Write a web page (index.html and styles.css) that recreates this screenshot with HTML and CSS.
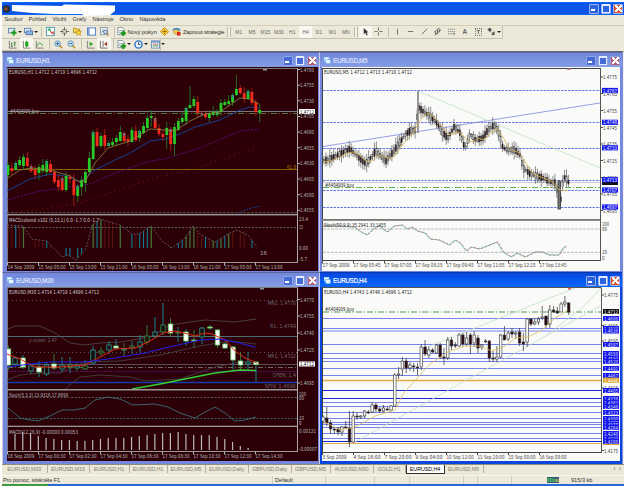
FILE: index.html
```html
<!DOCTYPE html>
<html lang="cs">
<head>
<meta charset="utf-8">
<title>EURUSD,H4</title>
<link rel="stylesheet" href="styles.css">
</head>
<body>
<svg class="defs" width="0" height="0">
  <symbol id="newchart" viewBox="0 0 10 10"><rect x=".5" y="1.5" width="7" height="5" fill="#dcecf8" stroke="#5d83a8"/><path d="M6.5 3.5v6M3.5 6.5h6" stroke="#1fa01f" stroke-width="2.2"/></symbol>
  <symbol id="profiles" viewBox="0 0 10 10"><rect x=".5" y="1.5" width="7" height="5" fill="#e8f1fb" stroke="#5583bb"/><rect x="2.5" y="4.5" width="7" height="4" fill="#8fb8e8" stroke="#4a74ac"/></symbol>
  <symbol id="market" viewBox="0 0 10 10"><rect x=".5" y=".5" width="9" height="9" fill="#fff" stroke="#4f9fb5"/><path d="M2 4l2-2 1 3" stroke="#1f9f3f" fill="none" stroke-width="1.3"/><path d="M5 5l3 3M8 5v3" stroke="#c33" stroke-width="1.2"/></symbol>
  <symbol id="target" viewBox="0 0 10 10"><circle cx="5" cy="5" r="2.7" fill="none" stroke="#777"/><path d="M5 0v4M5 6v4M0 5h4M6 5h4" stroke="#666"/></symbol>
  <symbol id="navi" viewBox="0 0 10 10"><path d="M.5 1.5h3l1 1h3v4h-7z" fill="#f6d35b" stroke="#b78a20"/><path d="M6.3 3l1 2 2.3.3-1.7 1.6.5 2.5-2.1-1.3-2 1.3.4-2.5L3 5.300l2.300-.3z" fill="#ffd92e" stroke="#a97a13" stroke-width=".6"/></symbol>
  <symbol id="terminal" viewBox="0 0 10 10"><rect x=".5" y="1" width="9" height="8" fill="#fff" stroke="#4476c4"/><path d="M2 1v8" stroke="#7da4e0" stroke-width="2"/></symbol>
  <symbol id="tester" viewBox="0 0 10 10"><rect x=".5" y=".5" width="8" height="8" fill="#eaf0f4" stroke="#8c9cac"/><path d="M2 6l2-3 2 2" stroke="#48a" fill="none"/><circle cx="6" cy="5.500" r="2" fill="#cde4ff" stroke="#668"/><path d="M7.500 7l2 2.500" stroke="#a83" stroke-width="1.300"/></symbol>
  <symbol id="order" viewBox="0 0 10 10"><path d="M1 .5h5l2 2v6H1z" fill="#fff" stroke="#7b8b9b"/><path d="M2 4h4M2 6h2" stroke="#89a"/><path d="M7 4v6M4 7h6" stroke="#189818" stroke-width="2.300"/></symbol>
  <symbol id="diamond" viewBox="0 0 10 10"><path d="M5 .5L9.500 5 5 9.500.5 5z" fill="#ffd13b" stroke="#c08a12"/><path d="M5 2.500v5M2.500 5h5" stroke="#8d6810" stroke-width=".9"/></symbol>
  <symbol id="expert" viewBox="0 0 10 10"><ellipse cx="5" cy="3" rx="4.500" ry="2" fill="#4c8fd6"/><circle cx="4.500" cy="5" r="3" fill="#f0c850" stroke="#a77f24" stroke-width=".6"/><path d="M2 3q3-4 5.500 0" fill="#3c7fca"/><rect x="5.500" y="5.500" width="4" height="4" fill="#d9281c"/></symbol>
  <symbol id="cursor" viewBox="0 0 10 10"><path d="M3 1v7l1.800-1.500L6.200 9.500l1.300-.7L6 6h2.400z" fill="#333"/></symbol>
  <symbol id="cross" viewBox="0 0 10 10"><path d="M5 .5v3.500M5 6v3.500M.5 5H4M6 5h3.500" stroke="#666"/></symbol>
  <symbol id="vline" viewBox="0 0 10 10"><path d="M5 2v6.500" stroke="#666"/></symbol>
  <symbol id="hline" viewBox="0 0 10 10"><path d="M2 5h6" stroke="#666"/></symbol>
  <symbol id="trend" viewBox="0 0 10 10"><path d="M2 8l6-6" stroke="#666"/></symbol>
  <symbol id="channel" viewBox="0 0 10 10"><path d="M1 6l6-5M2 9l7-6M3 5v4M5 3v5M7 2v4" stroke="#555" stroke-width=".9"/></symbol>
  <symbol id="fib" viewBox="0 0 10 10"><path d="M1 2.500h8M1 5h8M1 7.500h8" stroke="#888" stroke-dasharray="1.500 .6"/><path d="M8 6v3" stroke="#777"/></symbol>
  <symbol id="arrows" viewBox="0 0 10 10"><path d="M3 1l2 2-2 2-2-2zM5 5.500l3 2.500M8 5v3.500H5M4 5l1 1" fill="#444" stroke="#444" stroke-width=".7"/></symbol>
  <symbol id="bars" viewBox="0 0 10 10"><path d="M1.500 1v8h8M4 3v5M4 7h1.500M7.500 2v5M7.500 3H9" fill="none" stroke="#777"/><path d="M4 3v4M7 2v4" stroke="#3f9b3f"/></symbol>
  <symbol id="candles" viewBox="0 0 10 10"><path d="M1.500 1v8h8" fill="none" stroke="#777"/><path d="M5 1v7" stroke="#187c18"/><rect x="3.500" y="2" width="3.500" height="5" fill="#18a818"/></symbol>
  <symbol id="line" viewBox="0 0 10 10"><path d="M1.500 1v8h8" fill="none" stroke="#777"/><path d="M2 7l3-4 4 3" fill="none" stroke="#3b9d3b"/></symbol>
  <symbol id="zoomin" viewBox="0 0 10 10"><path d="M6 6l3 3" stroke="#c19a35" stroke-width="2"/><circle cx="4" cy="4" r="3" fill="#d2ecff" stroke="#4688b4"/><path d="M4 2.500v3M2.500 4h3" stroke="#246"/></symbol>
  <symbol id="zoomout" viewBox="0 0 10 10"><path d="M6 6l3 3" stroke="#c19a35" stroke-width="2"/><circle cx="4" cy="4" r="3" fill="#d2ecff" stroke="#4688b4"/><path d="M2.500 4h3" stroke="#246"/></symbol>
  <symbol id="scroll" viewBox="0 0 10 10"><path d="M1.500 1v8h8" fill="none" stroke="#777"/><path d="M4 2l4 2.500L4 7z" fill="#29a429"/></symbol>
  <symbol id="shift" viewBox="0 0 10 10"><path d="M1.500 1v8h8M4.500 1v7" fill="none" stroke="#666"/><path d="M9 2L5.500 4.500 9 7z" fill="#a83b2b"/></symbol>
  <symbol id="clock" viewBox="0 0 10 10"><circle cx="5" cy="5" r="4" fill="#e9f4ff" stroke="#2b6fc8" stroke-width="1.500"/><path d="M5 2.500V5h2" fill="none" stroke="#246"/></symbol>
  <symbol id="template" viewBox="0 0 10 10"><rect x=".5" y="1" width="9" height="8" fill="#e4edf5" stroke="#6c8cb0"/><path d="M.5 2h9" stroke="#5c8fd0" stroke-width="1.500"/><path d="M2 5l2-1 2 1 2-1" stroke="#c54" fill="none"/><path d="M2 7l2-1 2 1 2-1" stroke="#393" fill="none"/></symbol>
  <symbol id="doc" viewBox="0 0 8 8"><rect x=".5" y=".5" width="5" height="4" fill="#fff" stroke="#a7e0ff"/><rect x="2" y="3" width="5.500" height="4.500" fill="#e9f8ff" stroke="#68a7e0" stroke-width=".7"/></symbol>
</svg>

<div class="app">
  <header class="title">
    <svg class="logo" viewBox="0 0 340 12" preserveAspectRatio="none"><circle cx="4.500" cy="6" r="3.700" fill="#26303b"/><circle cx="4" cy="6" r="1.700" fill="#8a4c3a"/><path d="M10 2L60 3 62 1.500 113 2.500 113 8 108 12 83 13 80 11 52 11 30 10 10 8z" fill="#fff"/></svg>
    <div class="controls"><i class="min"></i><i class="max"></i><i class="close"></i></div>
  </header>
  <nav class="menu"><span>Soubor</span><span>Pohled</span><span>Vložit</span><span>Grafy</span><span>Nástroje</span><span>Okno</span><span>Nápověda</span></nav>
  <div class="bars">
    <div class="bar first">
      <b class="drop"><svg><use href="#newchart"/></svg></b><b class="drop"><svg><use href="#profiles"/></svg></b><hr>
      <b><svg><use href="#market"/></svg></b><b><svg><use href="#target"/></svg></b><b><svg><use href="#navi"/></svg></b><b><svg><use href="#terminal"/></svg></b><b><svg><use href="#tester"/></svg></b><hr>
      <b class="label order"><svg><use href="#order"/></svg><span>Nový pokyn</span></b><b><svg><use href="#diamond"/></svg></b><b class="label strategy"><svg><use href="#expert"/></svg><span>Zapnout strategie</span></b>
      <hr class="grip">
      <b class="time">M1</b><b class="time">M5</b><b class="time">M15</b><b class="time">M30</b><b class="time">H1</b><b class="time on">H4</b><b class="time">D1</b><b class="time">W1</b><b class="time">MN</b>
      <hr class="grip">
      <b class="on"><svg><use href="#cursor"/></svg></b><b><svg><use href="#cross"/></svg></b><hr>
      <b><svg><use href="#vline"/></svg></b><b><svg><use href="#hline"/></svg></b><b><svg><use href="#trend"/></svg></b><b><svg><use href="#channel"/></svg></b><b><svg><use href="#fib"/></svg></b><b class="letter">A</b><b class="letter"><u>T</u></b><b class="drop"><svg><use href="#arrows"/></svg></b>
    </div>
    <div class="bar second">
      <b><svg><use href="#bars"/></svg></b><b class="on"><svg><use href="#candles"/></svg></b><b><svg><use href="#line"/></svg></b><hr>
      <b><svg><use href="#zoomin"/></svg></b><b><svg><use href="#zoomout"/></svg></b><hr>
      <b><svg><use href="#scroll"/></svg></b><b class="on"><svg><use href="#shift"/></svg></b><hr>
      <b class="drop"><svg><use href="#order"/></svg></b><b class="drop"><svg><use href="#clock"/></svg></b><b class="drop"><svg><use href="#template"/></svg></b>
    </div>
  </div>
  <main class="desk">
    <section class="win"><h2><svg><use href="#doc"/></svg>EURUSD,H1<div class="controls"><i class="min"></i><i class="max"></i><i class="close"></i></div></h2><svg class="chart dark" id="h1" viewBox="7 67 311 204"></svg></section>
    <section class="win"><h2><svg><use href="#doc"/></svg>EURUSD,M5<div class="controls"><i class="min"></i><i class="max"></i><i class="close"></i></div></h2><svg class="chart light" id="m5" viewBox="322 67 298 204"></svg></section>
    <section class="win"><h2><svg><use href="#doc"/></svg>EURUSD,M30<div class="controls"><i class="min"></i><i class="max"></i><i class="close"></i></div></h2><svg class="chart dark" id="m30" viewBox="7 287 311 174"></svg></section>
    <section class="win active"><h2><svg><use href="#doc"/></svg>EURUSD,H4<div class="controls"><i class="min"></i><i class="max"></i><i class="close"></i></div></h2><svg class="chart light" id="h4" viewBox="322 287 298 174"></svg></section>
  </main>
  <div class="tabs"><span>EURUSD,M30</span><span>EURUSD,M15</span><span>EURUSD,H1</span><span>EURUSD,H1</span><span>EURUSD,M5</span><span>EURUSD,Daily</span><span>GBPUSD,Daily</span><span>GBPUSD,M5</span><span>AUDUSD,M30</span><span>GOLD,H1</span><span class="current">EURUSD,H4</span><span>EURUSD,M5</span><em>‹&ensp;›</em></div>
  <footer class="status"><span>Pro pomoc, stiskněte F1</span><span>Default</span><span></span><span></span><span></span><span></span><span></span><span class="net"><svg viewBox="0 0 12 6"><path d="M0 0h12v6H0z" fill="#365f78"/><path d="M1 1v4M3 1v4M5 1v4M7 2v3" stroke="#4ed34e"/><path d="M9 2v3M11 2v3" stroke="#e6cf4a"/></svg>915/3 kb</span></footer>
  <div class="task"><i></i></div>
</div>
<script src="charts.js"></script>
</body>
</html>
```
FILE: styles.css
```css
* { box-sizing: border-box; }
body { margin: 0; width: 625px; height: 486px; overflow: hidden; background: #fff; font-family: "Liberation Sans", sans-serif; font-size: 6px; color: #333; }
.defs { display: block; }
.app { width: 622px; height: 484px; margin: 2px 0 0 2px; display: flex; flex-direction: column; background: #ece9d8; }
.title { height: 13px; flex: none; display: flex; justify-content: space-between; align-items: center; background: #0a55e8; padding-right: 1px; border-bottom: 1px solid #0b66fa; border-top: 1px solid #0b66fa; }
.logo { width: 340px; height: 12px; overflow: visible; }
.controls { display: flex; gap: 2px; margin-left: auto; }
.controls i { width: 10px; height: 10px; border: 1px solid #9db4f0; border-radius: 1px; background: #2e63dc; display: flex; align-items: center; justify-content: center; }
.controls .min::before { content: ""; width: 4px; height: 2px; background: #fff; margin: 3px 2px 0 0; }
.controls .max::before { content: ""; width: 6px; height: 6px; border: 1px solid #e3ebff; border-top-width: 2px; }
.controls .close { background: #e2532f; }
.controls .close::before { content: ""; width: 7px; height: 7px; background: linear-gradient(45deg, transparent 42%, #fff 42% 58%, transparent 58%), linear-gradient(135deg, transparent 42%, #fff 42% 58%, transparent 58%); }
.menu { height: 10px; flex: none; display: grid; grid-template-columns: 24px 24px 20px 20px 27px 20px 40px; padding-left: 2.500px; font-size: 5.700px; line-height: 9px; white-space: nowrap; }
.bars { flex: none; height: 26px; border-top: 1px solid #d0cdbd; }
.bar { height: 12.500px; display: flex; align-items: center; padding-left: 4px; border: solid #c6c3b4; border-width: 0 1px 1px 0; }
.first { width: 501px; }
.second { width: 159px; }
.bar b { width: 13.500px; height: 12px; flex: none; display: flex; align-items: center; justify-content: center; font-weight: 400; color: #666; }
.bar svg { width: 9px; height: 9px; flex: none; }
.bar .drop { width: 16.500px; justify-content: flex-start; padding-left: 1.500px; gap: 1px; }
.drop::after { content: ""; border: 2px solid transparent; border-top-color: #222; border-bottom: 0; }
.bar .on { background: #f8f7f0; }
.bar hr { width: 1px; height: 10px; border: 0; margin: 0 2px; background: #c2bfae; flex: none; }
.bar .grip { width: 4px; margin: 0 1px; border: solid #bbb8a8; border-width: 0 1px; background: #f4f2e8; }
.bar .label { font-size: 5.800px; letter-spacing: -.1px; color: #333; justify-content: flex-start; gap: 2px; white-space: nowrap; padding-left: 0; }
.bar .order { width: 41px; }
.bar .strategy { width: 55px; padding-left: 1px; }
.bar .strategy span { letter-spacing: -.22px; }
.bar .time { width: 13.400px; font-size: 5px; }
.bar .letter { font-size: 6.500px; font-weight: 700; }
.letter u { text-decoration: none; border: 1px dotted #777; width: 7px; height: 8px; line-height: 7px; font-size: 6px; text-align: center; }
.second b { width: 13.500px; }
.second .drop { width: 17px; }
.desk { flex: none; height: 413px; display: grid; grid-template-columns: 317px 303px; grid-template-rows: 220px 192px; background: #7c8fdd; border-top: 1px solid #68687c; border-right: 1px solid #eee; }
.win { display: flex; flex-direction: column; min-width: 0; background: #7388dc; padding: 1px 0 0 2px; border-left: 1px solid #ccd; border-top: 1px solid #59669c; overflow: hidden; }
.win h2 { height: 13px; flex: none; display: flex; align-items: center; gap: 2px; margin: 0; padding: 0 2px 0 2px; color: #d3ddfa; font-size: 6.500px; font-weight: 700; letter-spacing: -.45px; background: linear-gradient(#7289dc, #839ce3); }
.win h2 > svg { width: 7px; height: 7px; }
.win:not(.active) .controls i { border-color: #8fa5ea; background-color: #466bd5; }
.win:not(.active) .controls i.close { background-color: #b85d71; }
.win.active { background: #0846dc; border-top-color: #0638ad; }
.win.active h2 { background: linear-gradient(#0a4ae0, #0768fb); color: #e6efff; }
.chart { display: block; flex: none; margin-left: 2px; }
#h1 { width: 311px; height: 204px; }
#m30 { width: 311px; height: 174px; }
#m5 { width: 298px; height: 204px; }
#h4 { width: 298px; height: 174px; }
.win:nth-child(even) { padding-left: 0; }
.win:nth-child(even) h2 { padding-left: 4px; }
.chart.dark { background: #2d0007; }
.chart.light { background: #fafaf8; }
.chart text { font-family: "DejaVu Sans Condensed", "DejaVu Sans", sans-serif; font-size: 5.600px; }
.tabs { flex: none; height: 11px; display: grid; grid-template-columns: 45.500px 42px 40px 38px 38px 43px 43px 39px 43px 32px 39px 39px 1fr; line-height: 8px; font-size: 5.500px; letter-spacing: -.17px; color: #85826f; border-top: 1px solid #8e8c80; white-space: nowrap; }
.tabs span { border-right: 1px solid #b4b09e; height: 8px; text-align: center; }
.tabs .current { background: #fff; color: #000; height: 9px; border: solid #333; border-width: 0 1px 1px; }
.tabs em { font-style: normal; font-size: 7px; text-align: right; padding-right: 3px; }
.status { flex: none; height: 9px; display: grid; grid-template-columns: 271px 53px 49px 35px 54px 14px 34px 1fr; line-height: 8px; border-top: 1px solid #f9f8f1; white-space: nowrap; font-size: 5.600px; }
.status span { padding-left: 2px; border-right: 1px solid #d0cdbd; }
.status span:first-child { padding-left: 1px; letter-spacing: -.15px; }
.status .net { border: 0; padding-left: 35px; display: flex; gap: 12px; align-items: center; }
.net svg { width: 12px; height: 6px; }
.task { flex: 1; background: #2769d8; }
.task i { display: block; width: 46px; height: 100%; background: #3d9a41; }
```
FILE: charts.js
```js
const NS = 'http://www.w3.org/2000/svg';

function pane(id) {
  const root = document.getElementById(id);
  const add = (tag, attrs, text) => {
    const el = document.createElementNS(NS, tag);
    for (const k in attrs) el.setAttribute(k, attrs[k]);
    if (text !== undefined) el.textContent = text;
    root.appendChild(el);
  };
  return {
    rect: (x, y, w, h, fill, stroke, sw = 0.8) => add('rect', { x, y, width: w, height: h, fill, ...(stroke ? { stroke, 'stroke-width': sw } : {}) }),
    line: (x1, y1, x2, y2, stroke, dash, w = 1) => add('line', { x1, y1, x2, y2, stroke, 'stroke-width': w, 'stroke-dasharray': dash || 'none' }),
    poly: (points, stroke, dash, w = 0.8) => add('polyline', { points, fill: 'none', stroke, 'stroke-width': w, 'stroke-dasharray': dash || 'none' }),
    text: (x, y, str, fill, len) => add('text', { x, y: y + 2, fill, ...(len ? { textLength: len, lengthAdjust: 'spacingAndGlyphs' } : {}) }, str)
  };
}

// Deterministic jitter, so that each load draws the same bars.
function random(seed) {
  return () => (seed = (seed * 16807) % 2147483647) / 2147483647;
}

function at(points, x) {
  for (let i = 1; i < points.length; i++) {
    const [a, b] = [points[i - 1], points[i]];
    if (x <= b[0]) return a[1] + (b[1] - a[1]) * (x - a[0]) / (b[0] - a[0]);
  }
  return points[points.length - 1][1];
}
const pts = s => s.split(' ').map(p => p.split(',').map(Number));

function times(p, x0, y, labels, fill) {
  labels.forEach((t, i) => {
    p.text(x0 + 31 * i + 0.5, y, t, fill, t.length > 10 ? 27 : 24);
    p.line(x0 + 31 * i + 0.5, y - 4.5, x0 + 31 * i + 0.5, y - 1.5, fill);
  });
}

/* EURUSD,H1 */
{
  const p = pane('h1'), fg = '#b4bbb4';
  p.line(7, 68.5, 298, 68.5, '#777'); p.line(7.5, 68, 7.5, 263, '#777');
  p.line(7, 111.5, 298, 111.5, '#777c80'); p.line(7, 113.5, 298, 113.5, '#4c7a34', '6 2 1 2');
  p.line(7, 169.5, 298, 169.5, '#866000'); p.text(287, 167, '61.8', '#a87800', 9);
  p.poly('7,213 50,208 80,203 120,190 155,178 190,170 220,160 255,148', '#a21c18', '1 4');
  p.poly('7,200 40,191 70,187 90,184 115,173 150,161 165,159 200,148 240,131 259,129', '#6a10a0', '2 1.500');
  p.poly('238,213 248,209 260,206', '#1749a8', '2 1');
  p.poly('7,191 30,179 50,174 65,176 80,182 95,170 115,160 130,153 150,141 165,139 180,134 195,127 220,120 240,110 250,107 259,108', '#0c50b8');
  const candles = [[165,175],[168,171,1],[163,170],[160,165],[157,166],[158,166,1],[166,171,1],[170,175,1],[167,173,0,180],[165,171],[161,172],[164,172,1],[172,182,1],[180,187,1],[178,190,1],[176,190],[177,179,1],[180,195,1,206],[186,196,0,202],[180,187,0,196],[172,183,0,192],[158,172],[132,159,0,160],[132,146,1],[136,146],[135,146,1],[143,146],[142,145],[138,142],[132,141],[133,141,1],[139,142,1],[130,142],[131,140,1],[131,138],[126,133],[118,128],[116,118,0,127],[118,128,1],[128,134,1],[134,137,1],[128,135,0,149],[129,144,1,151],[127,144,0,156],[121,130],[118,122],[108,121],[105,108],[99,106],[102,113,1],[113,114.5,1],[114,117,1],[113,118],[112,115],[111,115],[103,112],[102,105],[101,104],[95,102],[89,95],[88,93,1],[93,99,1],[91,99],[92,103,1],[102,112,1],[110,113,0,122]];
  candles.forEach(([t, b, red, low], i) => {
    const x = 8 + i * 3.872, c = red ? '#f52a1d' : '#27cb27';
    const high = t - [3, 6, 2, 4][i % 4] - (i === 59 ? 10 : 0) - (i === 47 ? 15 : 0);
    p.line(x, high, x, low || b + [2, 4, 1][i % 3], red ? '#a82018' : '#27752a', '', 0.9);
    p.rect(x - 1.4, t, 2.8, b - t, c);
    if (i % 4 === 2) p.rect(x - 0.6, t, 1.2, 3, '#1c89bb');
  });
  p.poly('8,178 20,170 31,168 50,170 70,176 80,182 86,180 95,163 108,148 130,141 150,129 165,130 175,131 190,121 205,114 220,112 240,98 250,99 259,104', '#8c8a3c');
  p.line(7, 212.8, 298, 212.8, '#57575b', '3 1'); p.rect(7, 214, 291, 1.400, '#999');
  p.line(7, 227.5, 298, 227.5, '#5a5f60', '2 1.500');
  const macd = pts('7,225 23,226 32,239 47,241 62,257 68,255 76,260 86,249 92,225 100,219 120,225 132,234 139,234 151,226 162,241 172,248 185,238 193,226 200,234 215,242 230,233 237,230 248,235 257,247');
  for (let i = 0; i < 64; i++) {
    const x = 8 + i * 3.872, y = at(macd, x);
    const teal = [2, 10, 15, 16, 18, 19, 23, 32, 34, 35, 36, 42, 44, 45, 51, 54, 56, 63].includes(i);
    const green = [4, 22, 24, 29, 37, 46, 47, 48, 53, 55, 57].includes(i);
    const red = [0, 1, 3, 7, 8, 9, 11, 25, 26, 27, 33, 49, 50, 52, 58, 60, 61].includes(i);
    if (teal) p.line(x, y, x, 248, '#107a94', '', 1.1);
    else if (green) p.line(x, y, x, 248, '#447035', '', 1.3);
    else if (red) p.line(x, y, x, 248, '#8b231c', '1 1');
  }
  p.poly(macd.join(' '), '#63676a', '2 1.500');
  p.text(260, 253, '16', '#a7aaa7', 7);
  p.line(7, 262.5, 298, 262.5, '#999'); p.line(297.5, 68, 297.5, 263, '#aaa');
  p.text(9, 72, 'EURUSD,H1  1.4712 1.4719 1.4696 1.4712', '#ccc', 88);
  p.text(10, 111, '#6404939 buy', '#bbb', 29);
  p.text(9, 220, 'MACDcolored v102 (5,13,1) 0.0 -1.7 0.0 -1.7', '#ccc', 90);
  ['1.4780', '1.4755', '1.4730', '1.4705', '1.4680', '1.4655', '1.4630', '1.4605', '1.4580', '1.4555'].forEach((t, i) => {
    const y = 69.5 + i * 15.65; p.text(300, y, t, fg, 14); p.line(298, y, 300, y, fg);
  });
  [['23.4', 219, 9], ['15', 227, 4], ['0.00', 248, 9], ['-5.7', 259, 8]].forEach(a => p.text(299, a[1], a[0], fg, a[2]));
  p.rect(299, 109, 16, 5, '#fff'); p.text(300, 111.6, '1.4712', '#111', 14);
  p.rect(263, 69, 4, 1.500, '#8d9aa4');
  times(p, 7, 267, ['14 Sep 2009', '15 Sep 05:00', '15 Sep 13:00', '15 Sep 21:00', '16 Sep 05:00', '16 Sep 13:00', '16 Sep 21:00', '17 Sep 05:00', '17 Sep 13:00'], fg);
}

/* EURUSD,M5 */
{
  const p = pane('m5'), fg = '#444';
  p.line(322, 68.5, 601, 68.5, '#444'); p.line(322.5, 68, 322.5, 261, '#444');
  [90.5, 122.5, 148.5, 180.5, 190.5, 207.5].forEach(y => p.line(323, y, 600, y, '#6678e4', '2.500 1'));
  p.line(323, 187.5, 600, 187.5, '#5dab5d', '6 2 1 2'); p.line(323, 182.5, 600, 182.5, '#c9c9cf');
  p.line(323, 146.5, 600, 103, '#7c86dc', '', 0.8);
  p.line(418, 91, 600, 168, '#bfe0ca', '', 0.8);
  const path = pts('323,161 332,158 340,154 350,149 358,157 366,164 376,151 386,161 393,152 400,142 406,134 412,130 416,130 418,107 424,112 432,118 437,123 442,132 448,138 454,127 460,133 465,149 470,134 476,140 483,138 488,130 494,125 498,131 503,148 508,150 515,150 520,155 523,168 530,174 537,176 543,178 550,182 556,183 558,200 560,206 562,186 565,176 568,182');
  const smooth = [];
  for (let x = 323; x < 569; x += 5) smooth.push([x, (at(path, x) + at(path, Math.max(323, x - 8)) + at(path, Math.max(323, x - 4))) / 3 + 1]);
  const rnd = random(71);
  for (let x = 324; x < 569; x += 1.94) {
    const y = at(path, x), h = 2 + rnd() * 5, dark = rnd() > 0.5;
    p.line(x, y - h - rnd() * 4, x, y + h + rnd() * 3, '#444', '', 0.6);
    p.rect(x - 0.6, y - h / 2, 1.2, h, dark ? '#2d0a12' : '#ddd', '#333', 0.5);
  }
  p.line(418, 91, 418, 133, '#888', '', 1.7); p.rect(558, 181, 2.5, 28, '#777', '#333');
  p.poly(smooth.join(' '), '#d8b64e');
  p.rect(322, 219, 279, 1.800, '#777');
  p.line(323, 229, 600, 229, '#bbb', '3 1'); p.line(323, 252.300, 600, 252.300, '#bbb', '3 1');
  const st = '323,226 340,226 355,227 362,232 368,235 374,229 380,226 388,232 395,226 403,225 408,229 413,227 418,231 426,233 431,239 440,240 450,245 456,240 461,243 467,251 472,247 480,249 488,246 498,242 504,252 512,257 518,253 526,257 536,252 543,252 550,255 560,255 564,248 567,246';
  p.poly(st.replace(/(\d+),/g, (m, n) => (+n - 1) + ','), '#4cb9b1');
  p.poly(st, '#e07070', '2 2', 0.9);
  p.line(322, 260.5, 601, 260.5, '#444'); p.line(600.5, 68, 600.5, 261, '#555');
  p.text(324, 72, 'EURUSD,M5  1.4712 1.4713 1.4710 1.4712', '#222', 88);
  p.text(325, 184.500, '#6404939 buy', '#222', 29);
  p.text(324, 225.300, 'Stoch(50,9,9) 35.2941 33.1455', '#222', 62);
  [['1.4775', 77], ['1.4765', 93.500], ['1.4755', 110.500], ['1.4745', 127.500], ['1.4735', 144], ['1.4725', 160.500], ['1.4715', 177.500], ['1.4705', 194], ['1.4695', 210.500]].forEach(a => { p.text(603, a[1], a[0], fg, 14); p.line(601, a[1], 603, a[1], fg); });
  p.rect(602, 181, 16, 4, '#111');
  [['1.4767', 90.500], ['1.4748', 122.300], ['1.4733', 147.800], ['1.4713', 179.700], ['1.4707', 190], ['1.4697', 207]].forEach(a => { p.rect(602, a[1] - 2.6, 16, 5.2, '#1418ee'); p.text(603, a[1], a[0], '#eef', 14); });
  [['100', 224, 7], ['80', 229, 5], ['20', 252, 5], ['0', 257.500, 2.500]].forEach(a => p.text(602, a[1], a[0], fg, a[2]));
  p.rect(567, 68.500, 4, 1.500, '#c58aa6');
  times(p, 322, 265, ['17 Sep 2009', '17 Sep 05:45', '17 Sep 07:05', '17 Sep 08:25', '17 Sep 09:45', '17 Sep 11:05', '17 Sep 12:25', '17 Sep 13:45'], fg);
}

/* EURUSD,M30 */
{
  const p = pane('m30'), fg = '#b4bbb4';
  p.line(7, 287.5, 298, 287.5, '#777'); p.line(7.5, 288, 7.5, 452, '#777');
  [300.5, 352.5].forEach(y => p.line(8, y, 297, y, '#56585a', '1 3'));
  p.line(8, 336.5, 297, 336.5, '#4c6c70'); p.line(8, 382.5, 297, 382.5, '#173ba8', '', 1.3);
  p.line(8, 371.5, 297, 371.5, '#51116b', '2 1'); p.line(8, 367.5, 297, 367.5, '#656a5e', '5 2 1 2');
  p.line(8, 364.500, 297, 364.500, '#53515a');
  p.poly('8,329 15,326 40,326 55,333 70,343 85,345 100,343 120,342 150,337 170,325 190,322 205,320 235,322 256,319', '#4d4c4d');
  p.poly('7,380 20,375 40,373 60,373 85,362 120,361 160,355 200,346 230,341 256,344', '#49484a');
  p.poly('65,389 80,377 100,375 130,377 145,381 180,379 215,367 240,362 256,363', '#49484a');
  const candles = [[8.500,346,370,349,365,1],[15,356,366,358,364],[23,355,369,358,367,1],[31,364,374,366,371],[39,361,377,367,372,1],[46.500,362,376,365,374],[54,354,370,364,368,1],[62,357,372,365,369],[70,357,373,365,367],[77,363,371,366,368],[85,360,370,366,369],[93,346,365,350,363],[101,347,356,351,353],[109,341,354,345,350],[116,339,349,346,348,1],[124,343,356,349,350],[132,341,354,346,348],[140,335,352,342,347],[147,325,345,336,342],[155,317,338,332,336],[163,303,335,325,332],[170.500,318,337,324,333,1],[178,327,342,332,333],[186,329,346,332,341,1],[194,330,348,340,341,1],[202,327,344,328,337],[210,325,330,327,328,1],[217.500,329,348,330,345,1],[225,342,349,344,348,1],[233,346,370,347,360,1],[240.500,352,370,361,365,1],[248,352,371,362,364],[256,361,382,362,364.500,1]];
  candles.forEach(([x, h, l, t, b, solid], i) => {
    p.line(x, h, x, l, i % 3 ? '#1a7d83' : '#307437');
    p.rect(x - 2.2, t, 4.4, b - t, solid ? '#fff' : '#17100f', solid ? '#6ad467' : i % 2 ? '#2c9a8f' : '#379241');
  });
  p.poly('7,354 20,359 35,367 60,367 85,365 100,357 115,349 135,348 150,341 163,333 175,331 188,334 195,336 205,333 212,334 225,340 235,351 245,358 257,363', '#d92e16', '', 1);
  p.poly('7,367 30,364 50,362 85,362 115,358 145,353 165,348 200,340 220,339 235,342 255,347', '#2020e4', '', 1.2);
  p.poly('132,389 160,384 190,378 215,373 240,370 256,370.500', '#35cf35', '', 1.4);
  [['MR2: 1.4770', 303], ['R1: 1.4749', 326], ['MR1: 1.4722', 356], ['OPEN: 1.4', 374.500], ['SPIV: 1.4696', 385.500]].forEach(a => { const w = a[0].length * 2.6; p.text(296 - w, a[1], a[0], '#6a676c', w); });
  p.text(29, 339.5, 'y vcose: 1.47', '#6f6c70', 28);
  p.rect(7, 389, 291, 1.500, '#999'); p.rect(7, 425.700, 291, 1.300, '#999');
  p.line(8, 397.5, 297, 397.5, '#55585a', '2 1.500'); p.line(8, 418.500, 297, 418.500, '#35606a', '2 1.500');
  p.poly('8,408 20,418 30,420 38,421 50,416 62,410 75,410 85,408 95,400 108,397 120,399 133,405 155,404 168,407 180,413 195,418 205,412 215,407 225,413 235,421 245,420 256,417', '#397e83');
  [434,432,433,436,438,439,440,440,441,441,440,439,438,438,438,437,436,435,434,433,433,432,434,435,435,435,437,439,442,446,448].forEach((y, i) => p.line(15 + i * 7.77, y, 15 + i * 7.77, 450, '#b8b9b9', '', 1.2));
  p.line(7, 451.5, 298, 451.5, '#999'); p.line(297.5, 288, 297.5, 452, '#aaa');
  p.text(9, 292, 'EURUSD,M30  1.4714 1.4719 1.4696 1.4712', '#ccc', 90);
  p.text(9, 395, 'Stoch(5,3,3) 23.9316 17.8699', '#bbb', 59);
  p.text(9, 432.300, 'MACD(12,26,9) -0.00000 0.00053', '#bbb', 69);
  [['1.4770', 299.500], ['1.4755', 316], ['1.4740', 333], ['1.4725', 350], ['1.4695', 383]].forEach(a => { p.text(300, a[1], a[0], fg, 14); p.line(298, a[1], 300, a[1], fg); });
  [['100', 394, 7], ['80', 398, 5], ['20', 418, 5], ['0', 423, 2.500], ['0.00131', 430.500, 17], ['-0.00007', 448.500, 18]].forEach(a => p.text(299, a[1], a[0], fg, a[2]));
  p.rect(299, 361.5, 16, 5, '#fff'); p.text(300, 364.200, '1.4712', '#111', 14);
  p.rect(260, 288, 4, 1.500, '#8d9aa4');
  times(p, 7, 456, ['16 Sep 2009', '17 Sep 00:30', '17 Sep 02:30', '17 Sep 04:30', '17 Sep 06:30', '17 Sep 08:30', '17 Sep 10:30', '17 Sep 12:30', '17 Sep 14:30'], fg);
}

/* EURUSD,H4 */
{
  const p = pane('h4'), fg = '#444';
  p.line(322, 287.5, 602, 287.5, '#555'); p.line(322.5, 288, 322.5, 453, '#444');
  const levels = [[318.5,'1.4686'],[328.5,'1.4639'],[331,'1.4636'],[344.5,'1.4587'],[353.5,'1.4550'],[358.5,'1.4532'],[361.5,'1.4520'],[368.5,'1.4491'],[375.5,'1.4467'],[390.5,'1.4405',1],[398.5,'1.4376',1],[402.5,'1.4362'],[406.5,'1.4346'],[412.5,'1.4323'],[418.5,'1.4300'],[422.5,'1.4285'],[424.5,'1.4277'],[427.5,'1.4264'],[433.5,'1.4240'],[438.5,'1.4222'],[441.5,'1.4208',1]];
  levels.forEach(([y, , strong]) => p.line(323, y, 601, y, strong ? '#1923d8' : '#7582ec', '', strong ? 1.2 : 1));
  p.line(323, 380.5, 601, 380.5, '#e1ad43', '', 1.3); p.line(323, 443.500, 601, 443.500, '#dfae51');
  p.line(323, 312, 601, 312, '#8cb88c', '6 2 1 2', 1.3);
  ['355,442 600,306', '430,346 575,288', '548,334 582,308 602,287'].forEach(s => p.poly(s, '#c3dfcb'));
  const candles = [[415,424,417,421,0],[407,426,418,423,1],[420,434,423,429,1],[427,434,429,430,1],[427,435,429,432,1],[426,436,427,432,0],[421,428,427,428,1],[411,447,428,442,1],[411,443,416,442,0],[412,420,416,417,1],[415,419,416,417,0],[410,418,411,416,0],[410,414,412,413,1],[402,413,405,412,0],[403,412,405,409,1],[407,413,409,411,1],[405,412,408,411,0],[407,411,409,410,1],[405,411,406,410,0],[373,407,375,406,0],[367,379,374,375,0],[357,376,361,369,0],[358,373,361,368,1],[362,371,365,368,0],[363,372,366,367,1],[363,375,367,368,1],[344,370,347,367,0],[340,356,347,354,1],[346,358,350,355,0],[348,353,350,352,1],[344,354,345,353,0],[343,359,345,357,1],[348,365,357,358,1],[337,360,340,358,0],[337,350,340,346,1],[342,348,345,346,1],[333,347,335,346,0],[333,346,335,344,1],[332,346,338,344,0],[333,354,335,344,1],[331,347,335,343,0],[335,353,338,348,1],[344,350,345,347,0],[339,343,341,341.500,1],[340,362,341,358,1],[351,362,358,359,1],[346,362,357,359,0],[334,358,335,357,0],[326,340,335,340,1],[331,341,333,339,0],[328,338,332,334,1],[331,339,333,334,0],[328,346,332,343,1],[333,351,342,344,1],[318,347,319,342,0],[318,326,319,324,1],[318,325,322,324,0],[317,325,319,322,0],[306,320,317,318,0],[316,328,316,325,1],[305,328,310,324,0],[306,313,310,312,1],[307,314,311,313,1],[302,312,304,312,0],[296,307,302,304,0],[302,315,303,312,1]];
  candles.forEach(([h, l, t, b, down], i) => {
    const x = 323 + i * 3.78;
    p.line(x, h, x, l, '#444', '', 0.8);
    p.rect(x - 1.25, t, 2.5, Math.max(b - t, 0.8), down ? '#2d0711' : '#fafafa', '#333', 0.6);
  });
  p.poly('323,421 340,430 355,427 375,416 395,410 403,394 418,377 430,364 448,352 465,346 480,346 492,351 505,346 515,338 528,337 542,330 555,318 567,311', '#d9bd61');
  p.line(322, 452.5, 602, 452.5, '#444'); p.line(601.5, 288, 601.5, 453, '#555');
  p.text(324, 292, 'EURUSD,H4  1.4743 1.4748 1.4696 1.4712', '#222', 88);
  p.text(325, 309.300, '#6404939 buy', '#222', 29);
  [['1.4775', 295], ['1.4655', 325.500], ['1.4595', 341], ['1.4415', 388], ['1.4175', 450.500]].forEach(a => { p.text(604, a[1], a[0], fg, 14); p.line(602, a[1], 604, a[1], fg); });
  p.rect(603, 309, 16, 5, '#111'); p.text(604, 311.500, '1.4712', '#eee', 14);
  p.rect(603, 441, 16, 4, '#dca52f');
  levels.forEach(([y, t]) => { p.rect(603, y - 2.5, 16, 5, '#1418ee'); p.text(604, y, t, '#dde', 14); });
  p.rect(603, 377.800, 16, 5.200, '#dca52f'); p.text(604, 380.500, '1.4446', '#fff', 14);
  p.rect(568, 288, 3, 1.500, '#e45a5a');
  times(p, 322, 456.5, ['3 Sep 2009', '4 Sep 16:00', '7 Sep 20:00', '9 Sep 04:00', '10 Sep 12:00', '11 Sep 20:00', '15 Sep 00:00', '16 Sep 08:00'], fg);
}
```
